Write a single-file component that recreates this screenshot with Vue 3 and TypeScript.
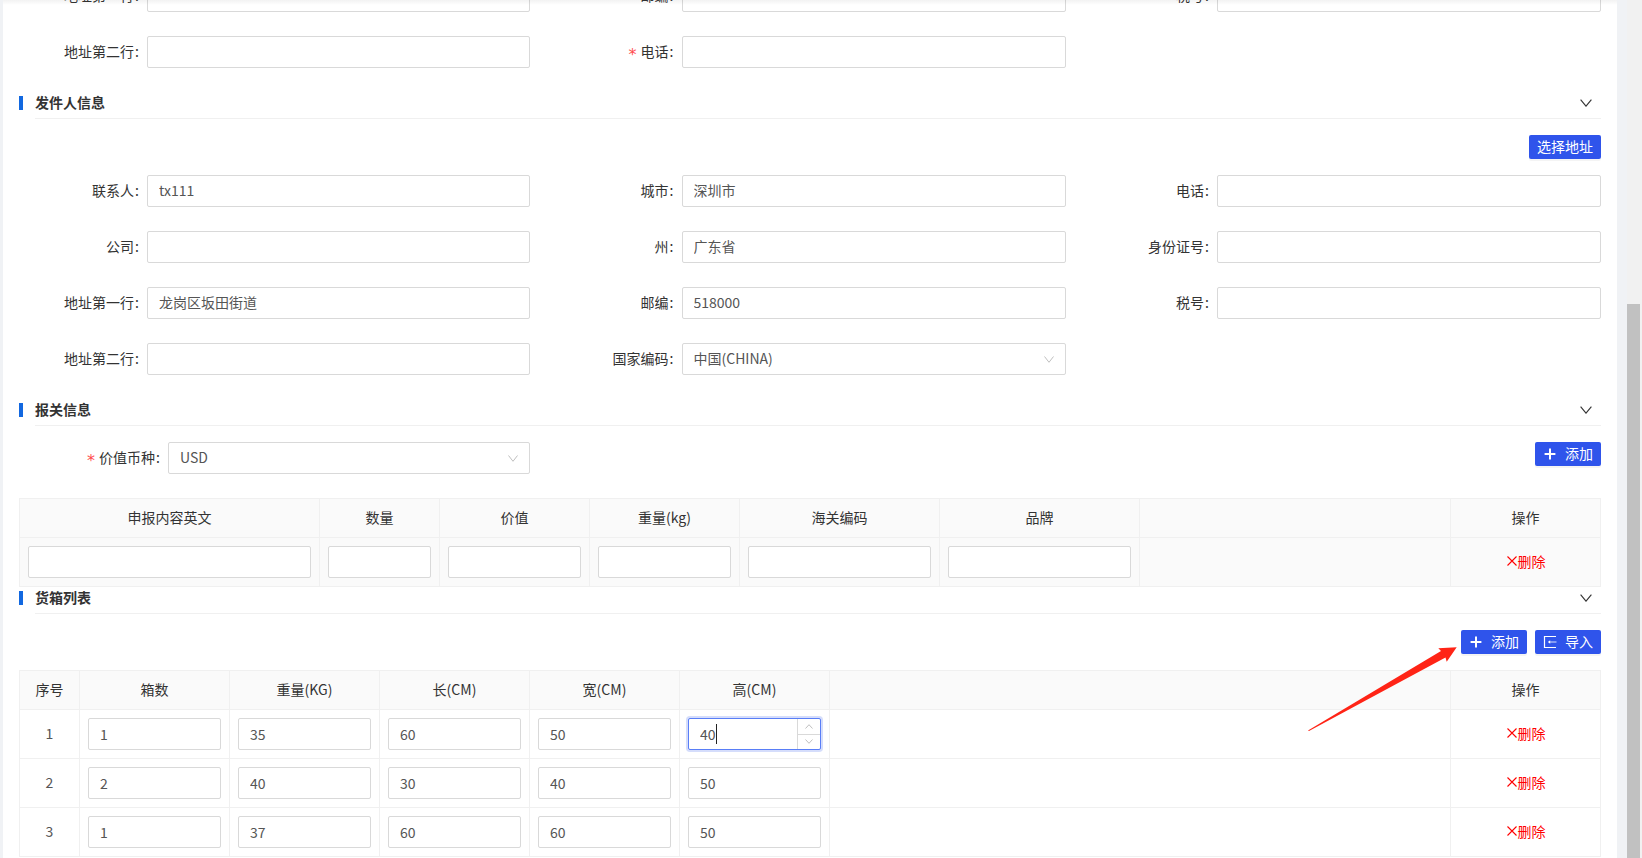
<script setup lang="ts">
interface Field {
  label: string
  value?: string
  required?: boolean
  select?: boolean
}

const receiverFields: (Field | null)[] = [
  { label: '地址第一行' },
  { label: '邮编' },
  { label: '税号' },
  { label: '地址第二行' },
  { label: '电话', required: true },
  null
]

const senderFields: (Field | null)[] = [
  { label: '联系人', value: 'tx111' },
  { label: '城市', value: '深圳市' },
  { label: '电话' },
  { label: '公司' },
  { label: '州', value: '广东省' },
  { label: '身份证号' },
  { label: '地址第一行', value: '龙岗区坂田街道' },
  { label: '邮编', value: '518000' },
  { label: '税号' },
  { label: '地址第二行' },
  { label: '国家编码', value: '中国(CHINA)', select: true },
  null
]

const customsCols = [
  { title: '申报内容英文', width: 300 },
  { title: '数量', width: 120 },
  { title: '价值', width: 150 },
  { title: '重量(kg)', width: 150 },
  { title: '海关编码', width: 200 },
  { title: '品牌', width: 200 }
]

const boxCols = [
  { title: '箱数', key: 0 },
  { title: '重量(KG)', key: 1 },
  { title: '长(CM)', key: 2 },
  { title: '宽(CM)', key: 3 },
  { title: '高(CM)', key: 4 }
]

const boxRows: string[][] = [
  ['1', '35', '60', '50', '40'],
  ['2', '40', '30', '40', '50'],
  ['1', '37', '60', '60', '50']
]
</script>

<template>
  <div class="page">
    <div class="gutter-left"></div>

    <main class="main">
      <div class="form-grid">
        <template v-for="(f, i) in receiverFields" :key="i">
          <div v-if="f" class="field">
            <label class="label"><span v-if="f.required" class="star">*</span>{{ f.label }}<span class="colon">:</span></label>
            <input class="input" :value="f.value ?? ''" readonly />
          </div>
          <div v-else></div>
        </template>
      </div>

      <div class="sec-head">
        <i class="sec-bar"></i>
        <div class="sec-body">
          <span class="sec-title">发件人信息</span>
          <svg class="chev" width="12" height="8" viewBox="0 0 12 8"><path d="M.6.6 6 7.2 11.4.6" /></svg>
        </div>
      </div>

      <div class="toolbar">
        <button class="btn"><span class="btn-text">选择地址</span></button>
      </div>

      <div class="form-grid">
        <template v-for="(f, i) in senderFields" :key="i">
          <div v-if="f" class="field">
            <label class="label">{{ f.label }}<span class="colon">:</span></label>
            <div v-if="f.select" class="select">
              <span>{{ f.value }}</span>
              <svg class="chev-sm" width="10" height="7" viewBox="0 0 10 7"><path d="M.5.5 5 6.3 9.5.5" /></svg>
            </div>
            <input v-else class="input" :value="f.value ?? ''" readonly />
          </div>
          <div v-else></div>
        </template>
      </div>

      <div class="sec-head">
        <i class="sec-bar"></i>
        <div class="sec-body">
          <span class="sec-title">报关信息</span>
          <svg class="chev" width="12" height="8" viewBox="0 0 12 8"><path d="M.6.6 6 7.2 11.4.6" /></svg>
        </div>
      </div>

      <div class="currency-row">
        <div class="field currency">
          <label class="label label-wide"><span class="star">*</span>价值币种<span class="colon">:</span></label>
          <div class="select">
            <span>USD</span>
            <svg class="chev-sm" width="10" height="7" viewBox="0 0 10 7"><path d="M.5.5 5 6.3 9.5.5" /></svg>
          </div>
        </div>
        <button class="btn">
          <svg class="btn-icon" width="14" height="14" viewBox="0 0 14 14"><path d="M7 1.6v10.8M1.6 7h10.8" /></svg>
          <span class="btn-text">添加</span>
        </button>
      </div>

      <table class="grid-table shaded">
        <colgroup>
          <col v-for="c in customsCols" :key="c.title" :style="{ width: c.width + 'px' }" />
          <col />
          <col class="col-op" />
        </colgroup>
        <thead>
          <tr>
            <th v-for="c in customsCols" :key="c.title">{{ c.title }}</th>
            <th></th>
            <th>操作</th>
          </tr>
        </thead>
        <tbody>
          <tr>
            <td v-for="c in customsCols" :key="c.title"><input class="input" readonly /></td>
            <td></td>
            <td class="center">
              <a class="del">
                <svg width="12" height="12" viewBox="0 0 12 12"><path d="M1.500 1.500l9 9M10.500 1.500l-9 9" /></svg>删除
              </a>
            </td>
          </tr>
        </tbody>
      </table>

      <div class="sec-head">
        <i class="sec-bar"></i>
        <div class="sec-body">
          <span class="sec-title">货箱列表</span>
          <svg class="chev" width="12" height="8" viewBox="0 0 12 8"><path d="M.6.6 6 7.2 11.4.6" /></svg>
        </div>
      </div>

      <div class="toolbar">
        <button class="btn">
          <svg class="btn-icon" width="14" height="14" viewBox="0 0 14 14"><path d="M7 1.6v10.8M1.6 7h10.8" /></svg>
          <span class="btn-text">添加</span>
        </button>
        <button class="btn">
          <svg class="btn-icon thin" width="14" height="14" viewBox="0 0 14 14">
            <path d="M13 1.500H1.500v11H13" />
            <path class="import-arrow" d="M6.500 7H13.500" />
            <path class="import-head" d="M4.800 7 7.200 5.300v3.400z" />
          </svg>
          <span class="btn-text">导入</span>
        </button>
      </div>

      <table class="grid-table">
        <colgroup>
          <col class="col-idx" />
          <col v-for="c in boxCols" :key="c.key" class="col-box" />
          <col />
          <col class="col-op" />
        </colgroup>
        <thead>
          <tr>
            <th>序号</th>
            <th v-for="c in boxCols" :key="c.key">{{ c.title }}</th>
            <th></th>
            <th>操作</th>
          </tr>
        </thead>
        <tbody>
          <tr v-for="(row, r) in boxRows" :key="r">
            <td class="center">{{ r + 1 }}</td>
            <td v-for="c in boxCols" :key="c.key">
              <div v-if="r === 0 && c.key === 4" class="num-focus">
                <input class="num-inner" :value="row[c.key]" readonly />
                <i class="caret"></i>
                <div class="handlers">
                  <span class="handler">
                    <svg width="8" height="5" viewBox="0 0 8 5"><path d="M.5 4.500 4 .7l3.500 3.800" /></svg>
                  </span>
                  <span class="handler">
                    <svg width="8" height="5" viewBox="0 0 8 5"><path d="M.5.5 4 4.300 7.500.5" /></svg>
                  </span>
                </div>
              </div>
              <input v-else class="input" :value="row[c.key]" readonly />
            </td>
            <td></td>
            <td class="center">
              <a class="del">
                <svg width="12" height="12" viewBox="0 0 12 12"><path d="M1.500 1.500l9 9M10.500 1.500l-9 9" /></svg>删除
              </a>
            </td>
          </tr>
        </tbody>
      </table>
    </main>

    <div class="gutter-right"></div>
    <div class="scrollbar"><div class="thumb"></div></div>

    <div class="top-shadow"></div>
    <svg class="annotation" width="170" height="96" viewBox="1300 640 170 96">
      <polygon points="1308,730.500 1441,651 1438.300,648.300 1456.700,647.300 1446.700,661.700 1445.500,657.500 1309,731" />
    </svg>
  </div>
</template>

<style scoped>
.page {
  position: relative;
  display: flex;
  width: 1642px;
  height: 858px;
  overflow: hidden;
  background: #fff;
  font-family: "Noto Sans CJK SC", "Noto Sans", sans-serif;
  font-size: 14px;
  color: #333;
}
.gutter-left {
  flex: 0 0 3px;
  background: #f0f2f5;
}
.main {
  flex: 0 0 1614px;
  box-sizing: border-box;
  padding: 0 16px;
  overflow: hidden;
  background: #fff;
}
.gutter-right {
  flex: 0 0 10px;
  background: #f0f2f5;
}
.scrollbar {
  flex: 0 0 15px;
  background: #f1f1f1;
}
.thumb {
  width: 13px;
  height: 554px;
  margin-top: 304px;
  background: #c1c1c1;
}
.top-shadow {
  position: absolute;
  left: 3px;
  top: 0;
  width: 1614px;
  height: 5px;
  background: linear-gradient(to bottom, rgba(0, 0, 0, 0.05), rgba(0, 0, 0, 0));
  pointer-events: none;
}
.annotation {
  position: absolute;
  left: 1300px;
  top: 640px;
  pointer-events: none;
}
.annotation polygon {
  fill: #ff2416;
}

.form-grid {
  display: grid;
  grid-template-columns: 511px 512px 512px;
  column-gap: 23.5px;
  row-gap: 24px;
  margin-bottom: 24px;
}
.form-grid:first-child {
  margin-top: -20px;
}
.field {
  display: flex;
  align-items: center;
  min-width: 0;
  height: 32px;
}
.label {
  flex: 0 0 128px;
  box-sizing: border-box;
  height: 32px;
  padding-right: 8px;
  text-align: right;
  white-space: nowrap;
  line-height: 30px;
}
.label-wide {
  flex-basis: 149px;
}
.colon {
  margin-left: 1px;
}
.star {
  margin-right: 4px;
  color: #ff4d4f;
  font-family: "DejaVu Sans", sans-serif;
  font-size: 16px;
  vertical-align: -3px;
}
.input {
  box-sizing: border-box;
  display: block;
  flex: 1;
  width: 100%;
  min-width: 0;
  height: 32px;
  padding: 0 11px;
  border: 1px solid #d9d9d9;
  border-radius: 2px;
  outline: none;
  background: #fff;
  color: #555;
  font: inherit;
}
.form-grid .input {
  padding-bottom: 2px;
}
.select {
  box-sizing: border-box;
  flex: 1;
  min-width: 0;
  display: flex;
  align-items: center;
  justify-content: space-between;
  height: 32px;
  padding: 0 11px;
  border: 1px solid #d9d9d9;
  border-radius: 2px;
  background: #fff;
  color: #555;
}
.select > span {
  margin-bottom: 2px;
}
.chev-sm path {
  fill: none;
  stroke: #bfbfbf;
  stroke-width: 1;
}

.sec-head {
  display: flex;
  align-items: flex-start;
  gap: 12px;
}
.sec-bar {
  flex: 0 0 4px;
  height: 14px;
  margin-top: 4px;
  background: #1268e0;
}
.sec-body {
  flex: 1;
  box-sizing: border-box;
  display: flex;
  align-items: center;
  justify-content: space-between;
  height: 27px;
  padding: 0 9px 5px 0;
  border-bottom: 1px solid #f0f0f0;
}
.sec-title {
  font-weight: 700;
  line-height: 20px;
  margin-bottom: 2px;
  color: #333;
}
.chev path {
  fill: none;
  stroke: #333;
  stroke-width: 1.1;
}

.toolbar {
  display: flex;
  justify-content: flex-end;
  gap: 8px;
  margin: 16px 0;
}
.currency-row {
  display: flex;
  justify-content: space-between;
  align-items: flex-start;
  margin: 16px 0 24px;
}
.currency {
  width: 511px;
}
.btn {
  display: inline-flex;
  align-items: center;
  gap: 8px;
  height: 24px;
  padding: 0 8px;
  border: 0;
  border-radius: 2px;
  background: #2f54eb;
  color: #fff;
  font: inherit;
  line-height: 22px;
  box-shadow: 0 2px 0 rgba(0, 0, 0, 0.045);
}
.btn-text {
  margin-bottom: 2px;
}
.btn-icon path {
  fill: none;
  stroke: #fff;
  stroke-width: 2;
}
.btn-icon.thin path {
  stroke-width: 1.2;
}
.btn-icon.thin .import-arrow {
  stroke: #a9bbf7;
  stroke-width: 1.4;
}
.btn-icon.thin .import-head {
  fill: #fff;
  stroke: none;
}

.grid-table {
  box-sizing: border-box;
  width: 1582px;
  table-layout: fixed;
  border-collapse: separate;
  border-spacing: 0;
  border-top: 1px solid #f0f0f0;
  border-left: 1px solid #f0f0f0;
}
.col-op {
  width: 150px;
}
.col-idx {
  width: 60px;
}
.col-box {
  width: 150px;
}
.grid-table th,
.grid-table td {
  box-sizing: border-box;
  border-right: 1px solid #f0f0f0;
  border-bottom: 1px solid #f0f0f0;
}
.grid-table th {
  height: 39px;
  padding: 0 8px 2px;
  background: #fafafa;
  font-weight: 400;
  color: #333;
  text-align: center;
}
.grid-table td {
  height: 49px;
  padding: 8px;
}
.grid-table td.center {
  padding: 7px 8px 9px;
  text-align: center;
  color: #555;
}
.shaded td {
  background: #fafafa;
}
.del {
  display: inline-flex;
  align-items: center;
  color: #f00;
}
.del svg path {
  fill: none;
  stroke: #f00;
  stroke-width: 1.1;
}

.num-focus {
  position: relative;
  box-sizing: border-box;
  display: flex;
  height: 32px;
  border: 1px solid #597ef7;
  border-radius: 2px;
  box-shadow: 0 0 0 2px rgba(47, 84, 235, 0.2);
  background: #fff;
}
.num-inner {
  flex: 1;
  min-width: 0;
  box-sizing: border-box;
  padding: 0 11px;
  border: 0;
  outline: none;
  background: transparent;
  color: #555;
  font: inherit;
}
.caret {
  position: absolute;
  left: 27px;
  top: 5px;
  width: 1px;
  height: 20px;
  background: #222;
}
.handlers {
  flex: 0 0 22px;
  display: flex;
  flex-direction: column;
  border-left: 1px solid #d9d9d9;
}
.handler {
  flex: 1;
  display: flex;
  align-items: center;
  justify-content: center;
}
.handler + .handler {
  border-top: 1px solid #d9d9d9;
}
.handler path {
  fill: none;
  stroke: #bfbfbf;
  stroke-width: 1;
}
</style>
